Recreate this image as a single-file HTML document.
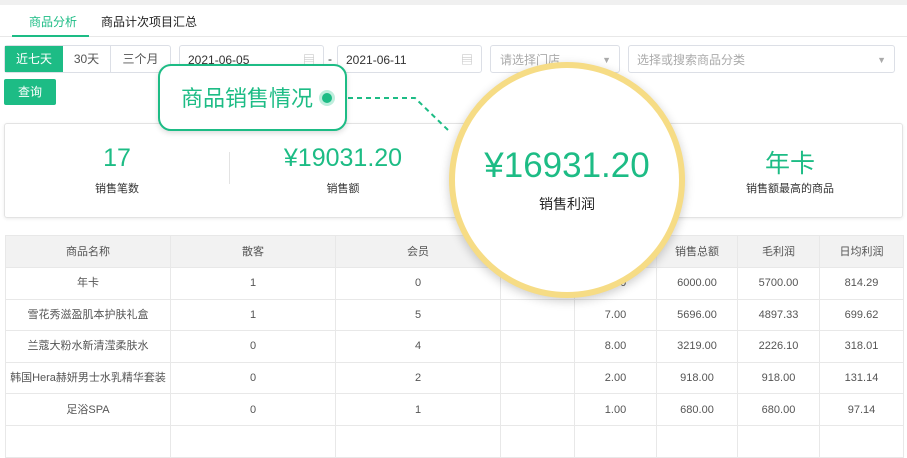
<!DOCTYPE html>
<html><head><meta charset="utf-8"><style>
*{box-sizing:border-box;margin:0;padding:0}
body{width:907px;height:428px;overflow:hidden;background:#fff;font-family:"Liberation Sans","Noto Sans CJK SC",sans-serif;position:relative;color:#333}
.a{position:absolute}
.box{position:absolute;border:1px solid #dcdfe6;border-radius:3px;background:#fff;font-size:12px;color:#333;line-height:28px}
.g{color:#1dbc85}
table{position:absolute;left:5px;top:235px;border-collapse:collapse;font-size:11px;color:#555;table-layout:fixed;width:898px}
td{border:1px solid #e8e8e8;text-align:center;height:31.6px;line-height:14px;padding:0;overflow:hidden;white-space:nowrap}
tr:first-child td{background:#f2f2f2;height:32px}
</style></head><body>
<div class="a" style="left:0;top:0;width:907px;height:5px;background:#f0f0f0"></div>
<div class="a g" style="left:29px;top:13px;font-size:12px">商品分析</div>
<div class="a" style="left:101px;top:13px;font-size:12px;color:#222">商品计次项目汇总</div>
<div class="a" style="left:0;top:36px;width:907px;height:1px;background:#e8e8e8"></div>
<div class="a" style="left:12px;top:35px;width:77px;height:2px;background:#1dbc85"></div>
<div class="box" style="left:4px;top:45px;width:167px;height:28px"></div>
<div class="a" style="left:5px;top:46px;width:58px;height:26px;background:#1dbc85;color:#fff;font-size:12px;line-height:26px;text-align:center">近七天</div>
<div class="a" style="left:63px;top:46px;width:48px;height:26px;border-right:1px solid #dcdfe6;font-size:12px;line-height:26px;text-align:center;color:#555">30天</div>
<div class="a" style="left:111px;top:46px;width:59px;height:26px;font-size:12px;line-height:26px;text-align:center;color:#555">三个月</div>
<div class="box" style="left:179px;top:45px;width:145px;height:28px;padding-left:8px">2021-06-05<span style="position:absolute;right:8px;color:#bbb">▤</span></div>
<div class="a" style="left:328px;top:52px;font-size:12px">-</div>
<div class="box" style="left:337px;top:45px;width:145px;height:28px;padding-left:8px">2021-06-11<span style="position:absolute;right:8px;color:#bbb">▤</span></div>
<div class="box" style="left:490px;top:45px;width:130px;height:28px;padding-left:9px;color:#aaa">请选择门店<span style="position:absolute;right:8px;font-size:9px">▼</span></div>
<div class="box" style="left:628px;top:45px;width:267px;height:28px;padding-left:8px;color:#aaa">选择或搜索商品分类<span style="position:absolute;right:8px;font-size:9px">▼</span></div>
<div class="a" style="left:4px;top:79px;width:52px;height:26px;background:#1dbc85;border-radius:2px;color:#fff;font-size:12px;line-height:26px;text-align:center">查询</div>

<div class="a" style="left:4px;top:123px;width:899px;height:95px;border:1px solid #e3e3e3;border-radius:3px;box-shadow:0 1px 3px rgba(0,0,0,.08)"></div>
<div class="a" style="left:229px;top:152px;width:1px;height:32px;background:#e3e3e3"></div>
<div class="a g" style="left:67px;top:144px;width:100px;text-align:center;font-size:25px">17</div>
<div class="a" style="left:67px;top:180px;width:100px;text-align:center;font-size:11px">销售笔数</div>
<div class="a g" style="left:263px;top:144px;width:160px;text-align:center;font-size:25px">¥19031.20</div>
<div class="a" style="left:263px;top:180px;width:160px;text-align:center;font-size:11px">销售额</div>
<div class="a g" style="left:740px;top:144px;width:100px;text-align:center;font-size:25px">年卡</div>
<div class="a" style="left:730px;top:180px;width:120px;text-align:center;font-size:11px">销售额最高的商品</div>

<table>
<colgroup><col style="width:165px"><col style="width:165px"><col style="width:165px"><col style="width:74px"><col style="width:82px"><col style="width:81px"><col style="width:82px"><col style="width:84px"></colgroup>
<tr><td>商品名称</td><td>散客</td><td>会员</td><td>次数</td><td>数量</td><td>销售总额</td><td>毛利润</td><td>日均利润</td></tr>
<tr><td>年卡</td><td>1</td><td>0</td><td></td><td>1.00</td><td>6000.00</td><td>5700.00</td><td>814.29</td></tr>
<tr><td>雪花秀滋盈肌本护肤礼盒</td><td>1</td><td>5</td><td></td><td>7.00</td><td>5696.00</td><td>4897.33</td><td>699.62</td></tr>
<tr><td>兰蔻大粉水新清滢柔肤水</td><td>0</td><td>4</td><td></td><td>8.00</td><td>3219.00</td><td>2226.10</td><td>318.01</td></tr>
<tr><td>韩国Hera赫妍男士水乳精华套装</td><td>0</td><td>2</td><td></td><td>2.00</td><td>918.00</td><td>918.00</td><td>131.14</td></tr>
<tr><td>足浴SPA</td><td>0</td><td>1</td><td></td><td>1.00</td><td>680.00</td><td>680.00</td><td>97.14</td></tr>
<tr><td></td><td></td><td></td><td></td><td></td><td></td><td></td><td></td></tr>
</table>

<svg class="a" style="left:0;top:0" width="907" height="428">
<path d="M330 98 H415 L448 130" fill="none" stroke="#1dbc85" stroke-width="2" stroke-dasharray="5 4"/>
</svg>
<div class="a" style="left:449px;top:62px;width:236px;height:236px;border-radius:50%;background:#fff;border:6px solid #f6dc85;box-shadow:0 3px 10px rgba(0,0,0,.2)"></div>
<div class="a g" style="left:449px;top:146px;width:236px;text-align:center;font-size:35px">¥16931.20</div>
<div class="a" style="left:449px;top:194px;width:236px;text-align:center;font-size:14px;color:#222">销售利润</div>

<div class="a" style="left:158px;top:64px;width:189px;height:67px;border:2px solid #1dbc85;border-radius:13px;background:#fff;box-shadow:0 2px 6px rgba(0,0,0,.15)"></div>
<div class="a g" style="left:181px;top:86px;font-size:22px;line-height:26px">商品销售情况</div>
<div class="a" style="left:319px;top:90px;width:16px;height:16px;border-radius:50%;background:#bfeedd"></div>
<div class="a" style="left:322px;top:93px;width:10px;height:10px;border-radius:50%;background:#1dbc85"></div>
</body></html>
